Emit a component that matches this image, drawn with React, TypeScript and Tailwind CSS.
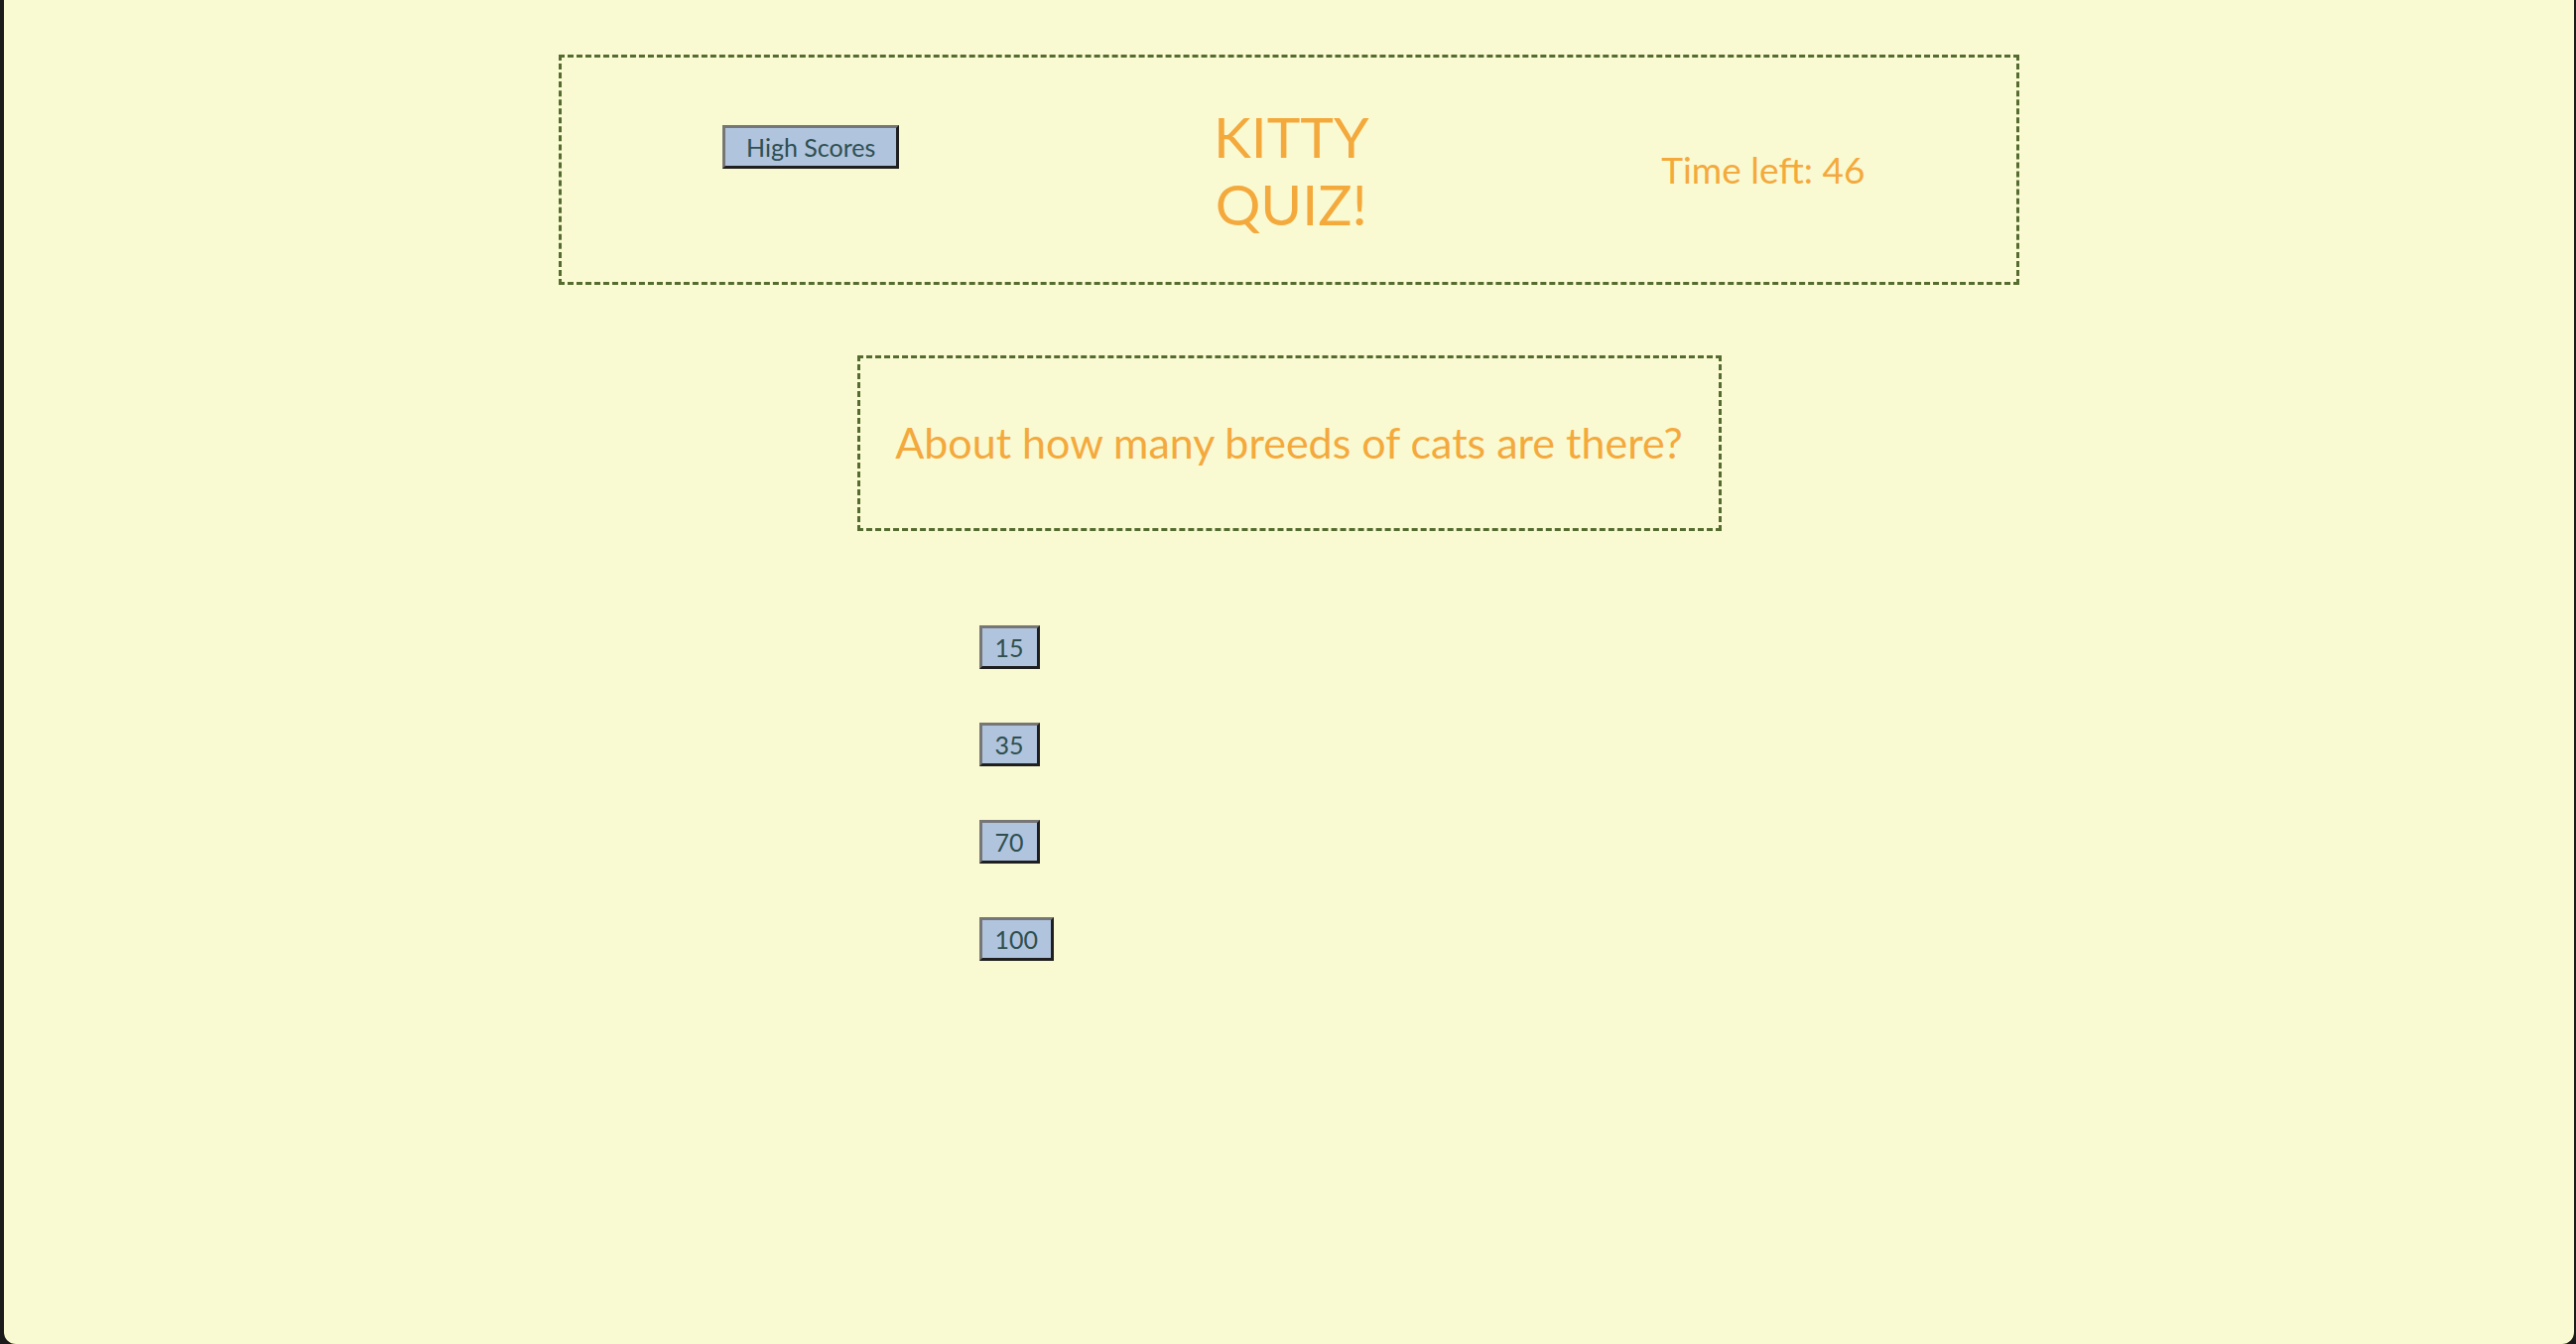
const answers = ["15", "35", "70", "100"];

const btn =
  "flex items-center h-[44px] border-[3px] border-solid border-t-[#767676] border-l-[#767676] border-b-[#1f1f1f] border-r-[#1f1f1f] bg-[#b0c4de] text-[#2f4f4f] text-[25px] leading-none";

export default function App() {
  return (
    <div className="h-[1354px] w-full bg-[#1b1b1b] pl-[4px] pr-[2px] font-['Lato',sans-serif]">
      <div className="h-full rounded-b-[12px] bg-[#fafad2]">
        {/* Header */}
        <header className="mx-auto pt-[55px] w-[1472px]">
          <div className="flex items-center h-[232px] border-[3px] border-dashed border-[#556b2f]">
            <button className={`${btn} ml-[162px] mb-[46px] px-[21px]`}>High Scores</button>
            <h1 className="ml-[315px] w-[160px] text-center text-[57px] leading-[68px] text-[#f4a93d]">
              KITTY QUIZ!
            </h1>
            <p className="ml-[293px] text-[37px] text-[#f4a93d]">Time left: 46</p>
          </div>
        </header>

        {/* Question */}
        <div className="mx-auto mt-[71px] w-[871px] h-[177px] border-[3px] border-dashed border-[#556b2f] flex items-center justify-center">
          <h2 className="text-[43px] text-[#f4a93d]">About how many breeds of cats are there?</h2>
        </div>

        {/* Answers */}
        <ul className="mx-auto mt-[95px] w-[871px] pl-[123px] flex flex-col gap-[54px]">
          {answers.map((a) => (
            <li key={a}>
              <button className={`${btn} px-[13px]`}>{a}</button>
            </li>
          ))}
        </ul>
      </div>
    </div>
  );
}
